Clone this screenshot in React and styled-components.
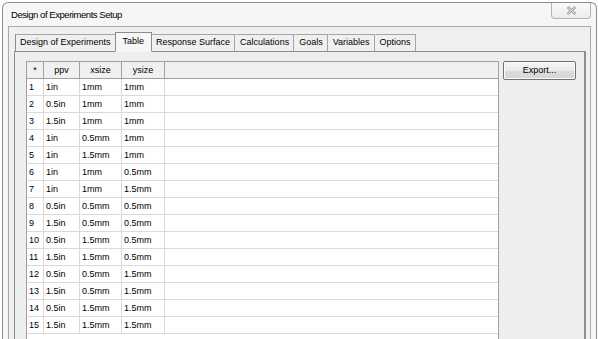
import React from 'react'
import styled, { createGlobalStyle } from 'styled-components'

const GlobalStyle = createGlobalStyle`
  html, body {
    margin: 0;
    padding: 0;
    background: #ffffff;
    overflow: hidden;
    height: 339px;
  }
  body {
    font-family: "Liberation Sans", Arial, sans-serif;
    font-size: 9px;
    color: #000;
  }
`

const rows = [
  ['1in', '1mm', '1mm'],
  ['0.5in', '1mm', '1mm'],
  ['1.5in', '1mm', '1mm'],
  ['1in', '0.5mm', '1mm'],
  ['1in', '1.5mm', '1mm'],
  ['1in', '1mm', '0.5mm'],
  ['1in', '1mm', '1.5mm'],
  ['0.5in', '0.5mm', '0.5mm'],
  ['1.5in', '0.5mm', '0.5mm'],
  ['0.5in', '1.5mm', '0.5mm'],
  ['1.5in', '1.5mm', '0.5mm'],
  ['0.5in', '0.5mm', '1.5mm'],
  ['1.5in', '0.5mm', '1.5mm'],
  ['0.5in', '1.5mm', '1.5mm'],
  ['1.5in', '1.5mm', '1.5mm'],
]

const tabs = ['Design of Experiments', 'Table', 'Response Surface', 'Calculations', 'Goals', 'Variables', 'Options']

const cols = '17px 36px 42px 43px 1fr'

const Window = styled.div`
  margin: 2px 1px 0 2px;
  height: 360px;
  border: 1px solid #8e8e8e;
  border-bottom: none;
  border-radius: 6px 6px 0 0;
  background: #f6f6f6;
  padding: 0 5px;
  display: flex;
  flex-direction: column;
`

const TitleBar = styled.div`
  height: 24px;
  display: flex;
  align-items: flex-start;
  justify-content: space-between;
`

const Title = styled.div`
  font-size: 9.5px;
  letter-spacing: -0.45px;
  padding: 6px 0 0 3px;
  color: #000;
`

const CloseButton = styled.div`
  width: 38px;
  height: 15px;
  border: 1px solid #b4b4b4;
  border-top: none;
  border-radius: 0 0 4px 4px;
  background: linear-gradient(#fafafa, #ececec);
  display: flex;
  align-items: center;
  justify-content: center;
`

const Client = styled.div`
  flex: 1;
  border: 1px solid #aaaaaa;
  border-bottom: none;
  background: #f0f0f0;
  padding: 5px 4px 0 5px;
  display: flex;
  flex-direction: column;
`

const TabStrip = styled.div`
  display: flex;
  align-items: flex-end;
  height: 19px;
  padding-left: 1px;
  position: relative;
  z-index: 1;
`

const Tab = styled.div`
  box-sizing: border-box;
  height: ${p => (p.$active ? '20px' : '17px')};
  line-height: ${p => (p.$active ? '17px' : '15px')};
  padding: 0 ${p => (p.$active ? '7px' : '4px')};
  margin: 0 ${p => (p.$active ? '-1px' : '0')} ${p => (p.$active ? '-1px' : '0')};
  border: 1px solid ${p => (p.$active ? '#898c95' : '#a5a5a5')};
  border-bottom: ${p => (p.$active ? '1px solid #f4f4f4' : 'none')};
  border-left-color: ${p => (p.$first || p.$active ? '#898c95' : 'transparent')};
  background: ${p => (p.$active ? '#f6f6f6' : '#f0f0f0')};
  white-space: nowrap;
  position: relative;
  z-index: ${p => (p.$active ? 2 : 1)};
`

const Panel = styled.div`
  flex: 1;
  border: 1px solid #898c95;
  border-right: 2px solid #8e8e8e;
  background: #eeeeee;
  padding: 9px 8px 0 11px;
  display: flex;
  gap: 4px;
  align-items: flex-start;
`

const Grid = styled.div`
  flex: 1;
  height: 300px;
  border: 1px solid #a0a0a0;
  border-bottom: none;
  background: #ffffff;
`

const Row = styled.div`
  display: grid;
  grid-template-columns: ${cols};
  height: 17px;
  box-sizing: border-box;
  border-bottom: 1px solid ${p => (p.$head ? '#a0a0a0' : '#dadada')};
  background: ${p => (p.$head ? '#f0f0f0' : '#ffffff')};
`

const Cell = styled.div`
  line-height: 16px;
  padding: 0 2px;
  white-space: nowrap;
  overflow: hidden;
  text-align: ${p => (p.$head ? 'center' : 'left')};
  border-right: 1px solid ${p => (p.$head ? '#a0a0a0' : '#dadada')};
  &:last-child {
    border-right: none;
  }
`

const ExportButton = styled.div`
  width: 71px;
  height: 17px;
  line-height: 17px;
  text-align: center;
  border: 1px solid #707070;
  border-radius: 2px;
  background: linear-gradient(#f6f6f6 0%, #eaeaea 50%, #dcdcdc 51%, #d6d6d6 100%);
  box-shadow: inset 0 0 0 1px #fbfbfb;
`

const CloseIcon = () => (
  <svg width="11" height="9" viewBox="0 0 11 9">
    <path d="M1.5 1 L9.5 8 M9.5 1 L1.5 8" stroke="#9a9a9a" strokeWidth="2.4" fill="none" />
    <path d="M1.5 1 L9.5 8 M9.5 1 L1.5 8" stroke="#f6f6f6" strokeWidth="0.9" fill="none" />
  </svg>
)

export default function App() {
  return (
    <>
      <GlobalStyle />
      <Window>
        <TitleBar>
          <Title>Design of Experiments Setup</Title>
          <CloseButton>
            <CloseIcon />
          </CloseButton>
        </TitleBar>
        <Client>
          <TabStrip>
            {tabs.map((t, i) => (
              <Tab key={t} $active={t === 'Table'} $first={i === 0}>
                {t}
              </Tab>
            ))}
          </TabStrip>
          <Panel>
            <Grid>
              <Row $head>
                <Cell $head>*</Cell>
                <Cell $head>ppv</Cell>
                <Cell $head>xsize</Cell>
                <Cell $head>ysize</Cell>
                <Cell $head />
              </Row>
              {rows.map((r, i) => (
                <Row key={i}>
                  <Cell>{i + 1}</Cell>
                  <Cell>{r[0]}</Cell>
                  <Cell>{r[1]}</Cell>
                  <Cell>{r[2]}</Cell>
                  <Cell />
                </Row>
              ))}
            </Grid>
            <ExportButton>Export...</ExportButton>
          </Panel>
        </Client>
      </Window>
    </>
  )
}
